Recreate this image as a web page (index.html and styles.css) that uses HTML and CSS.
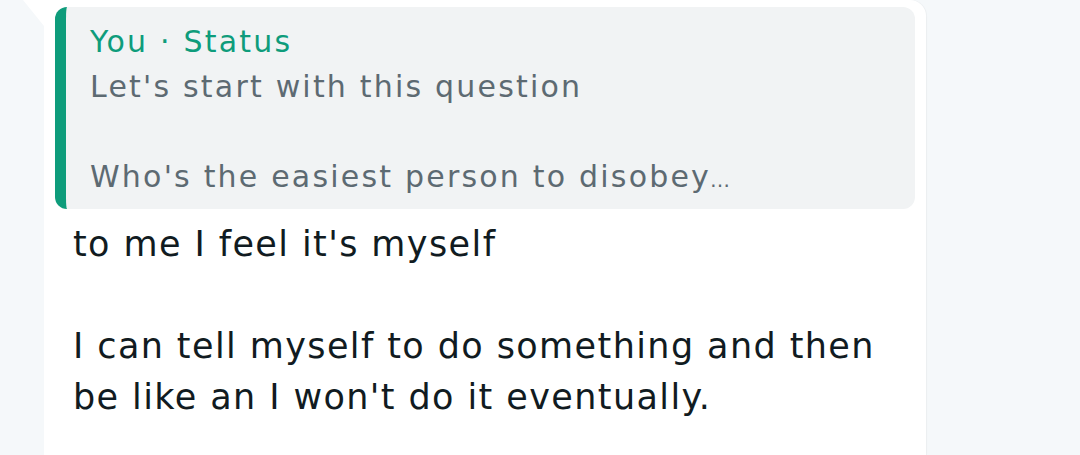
FILE: index.html
```html
<!DOCTYPE html>
<html lang="en">
<head>
<meta charset="utf-8">
<title>Status reply</title>
<link rel="stylesheet" href="styles.css">
</head>
<body>
<div class="chat">
  <div class="bubble">
    <div class="quote">
      <div class="quote-author">You · Status</div>
      <div class="quote-text">Let's start with this question<br><br>Who's the easiest person to disobey<span class="ellipsis">…</span></div>
    </div>
    <div class="message">to me I feel it's myself<br><br>I can tell myself to do something and then<br>be like an I won't do it eventually.</div>
  </div>
</div>
</body>
</html>
```

FILE: styles.css
```css
html, body {
  margin: 0;
  padding: 0;
}
body {
  background: #f5f8fa;
  font-family: "DejaVu Sans", "Open Sans", sans-serif;
  width: 1080px;
  height: 455px;
  overflow: hidden;
}
.chat {
  padding-left: 44px;
}
.bubble {
  position: relative;
  width: 882px;
  height: 470px;
  background: #ffffff;
  border-radius: 0 16px 16px 16px;
  box-shadow: 1px 0 1px rgba(0, 0, 0, 0.04);
  padding: 7px 11px 0 11px;
  box-sizing: border-box;
}
.bubble::before {
  content: "";
  position: absolute;
  left: -21px;
  top: 0;
  width: 21px;
  height: 26px;
  background: #ffffff;
  clip-path: polygon(0 0, 100% 0, 100% 100%);
}
.quote {
  background: #f1f3f4;
  border-left: 11px solid #0e9c7b;
  border-radius: 12px;
  padding: 12px 20px 10px 24px;
  height: 202px;
  box-sizing: border-box;
}
.quote-author {
  color: #0e9c7b;
  font-size: 30px;
  line-height: 45px;
  letter-spacing: 2.2px;
}
.quote-text {
  color: #5d6a72;
  font-size: 30px;
  line-height: 45px;
  letter-spacing: 2.2px;
}
.ellipsis {
  font-size: 20px;
  letter-spacing: 0;
  margin-left: -1px;
}
.message {
  color: #111b21;
  font-size: 35px;
  line-height: 51px;
  letter-spacing: 1.4px;
  padding: 10px 0 0 18px;
  white-space: nowrap;
}
```
